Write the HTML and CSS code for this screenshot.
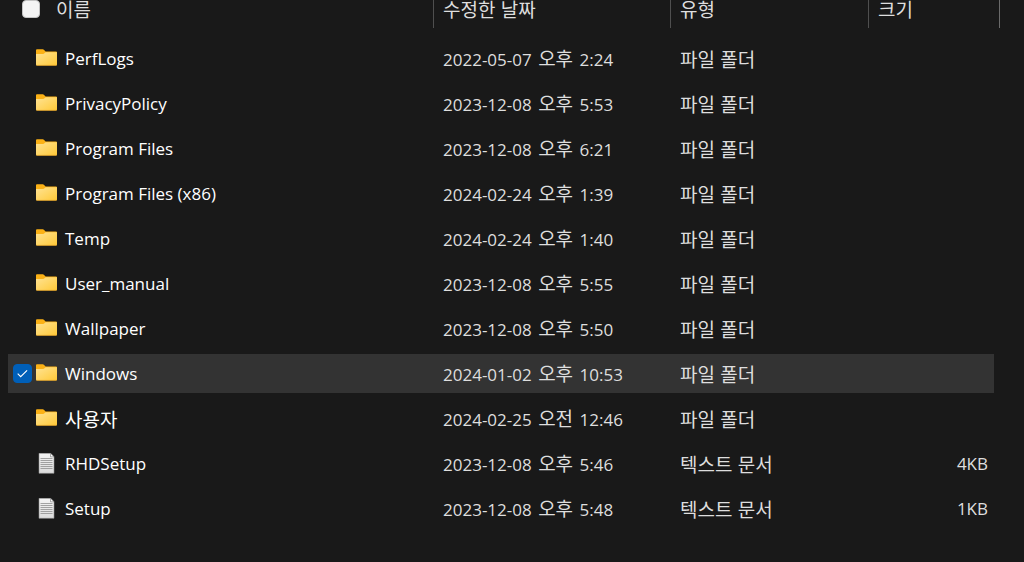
FILE: index.html
```html
<!DOCTYPE html>
<html lang="ko">
<head>
    <meta charset="UTF-8">
    <meta name="viewport" content="width=device-width, initial-scale=1.0">
    <title>로컬 디스크 (C:)</title>
    <link rel="stylesheet" href="styles.css">
</head>
<body>

    <!-- Shared icons -->
    <svg class="sprite" aria-hidden="true">
        <defs>
            <linearGradient id="folder-front" x1="0" y1="0" x2="1" y2="1">
                <stop offset="0" stop-color="#ffe394"/>
                <stop offset="1" stop-color="#ffc937"/>
            </linearGradient>
            <linearGradient id="paper" x1="0" y1="0" x2="0" y2="1">
                <stop offset="0" stop-color="#f4f4f4"/>
                <stop offset="1" stop-color="#dcdcdc"/>
            </linearGradient>
        </defs>
        <symbol id="folder" viewBox="0 0 21 21">
            <path d="M0 2.2Q0 1.3 1 1.3H6.8Q7.4 1.3 7.9 1.8L9.6 3.6H20Q21 3.6 21 4.6V9H0Z" fill="#fbb116"/>
            <path d="M0 6H7.2Q7.8 6 8.2 5.6L9.6 4.2H21V16.6Q21 17.6 20 17.6H1Q0 17.6 0 16.6Z" fill="url(#folder-front)"/>
            <path d="M.4 17.4H20.6" stroke="#e5a52a" stroke-width=".7"/>
        </symbol>
        <symbol id="document" viewBox="0 0 21 21">
            <path d="M3 .3H14.5L18 3.8V20.3H3Z" fill="url(#paper)" stroke="#8e8e8e" stroke-width=".6"/>
            <path d="M14.5 .3V3.8H18Z" fill="#fff" stroke="#777" stroke-width=".6"/>
            <path d="M4.5 5.5H16.5M4.5 7.5H16.5M4.5 9.5H16.5M4.5 11.5H16.5M4.5 13.5H16.5M4.5 15.5H16.5" stroke="#999" stroke-width=".9"/>
        </symbol>
    </svg>

    <table class="file-list">
        <colgroup>
            <col>
            <col class="col-date">
            <col class="col-type">
            <col class="col-size">
            <col class="col-end">
        </colgroup>
        <thead>
            <tr>
                <th>
                    <div class="head-name">
                        <input type="checkbox" class="check-all" aria-label="모두 선택">
                        <span>이름</span>
                    </div>
                </th>
                <th>수정한 날짜</th>
                <th>유형</th>
                <th class="head-size">크기</th>
                <th class="head-end"></th>
            </tr>
        </thead>
        <tbody>
            <tr>
                <td><label class="name"><input type="checkbox"><svg class="icon"><use href="#folder"/></svg>PerfLogs</label></td>
                <td>2022-05-07 <span class="ko">오후</span> 2:24</td>
                <td class="ko">파일 폴더</td>
                <td class="size"></td>
            </tr>
            <tr>
                <td><label class="name"><input type="checkbox"><svg class="icon"><use href="#folder"/></svg>PrivacyPolicy</label></td>
                <td>2023-12-08 <span class="ko">오후</span> 5:53</td>
                <td class="ko">파일 폴더</td>
                <td class="size"></td>
            </tr>
            <tr>
                <td><label class="name"><input type="checkbox"><svg class="icon"><use href="#folder"/></svg>Program Files</label></td>
                <td>2023-12-08 <span class="ko">오후</span> 6:21</td>
                <td class="ko">파일 폴더</td>
                <td class="size"></td>
            </tr>
            <tr>
                <td><label class="name"><input type="checkbox"><svg class="icon"><use href="#folder"/></svg>Program Files (x86)</label></td>
                <td>2024-02-24 <span class="ko">오후</span> 1:39</td>
                <td class="ko">파일 폴더</td>
                <td class="size"></td>
            </tr>
            <tr>
                <td><label class="name"><input type="checkbox"><svg class="icon"><use href="#folder"/></svg>Temp</label></td>
                <td>2024-02-24 <span class="ko">오후</span> 1:40</td>
                <td class="ko">파일 폴더</td>
                <td class="size"></td>
            </tr>
            <tr>
                <td><label class="name"><input type="checkbox"><svg class="icon"><use href="#folder"/></svg>User_manual</label></td>
                <td>2023-12-08 <span class="ko">오후</span> 5:55</td>
                <td class="ko">파일 폴더</td>
                <td class="size"></td>
            </tr>
            <tr>
                <td><label class="name"><input type="checkbox"><svg class="icon"><use href="#folder"/></svg>Wallpaper</label></td>
                <td>2023-12-08 <span class="ko">오후</span> 5:50</td>
                <td class="ko">파일 폴더</td>
                <td class="size"></td>
            </tr>
            <tr class="selected">
                <td><label class="name"><input type="checkbox" checked><svg class="icon"><use href="#folder"/></svg>Windows</label></td>
                <td>2024-01-02 <span class="ko">오후</span> 10:53</td>
                <td class="ko">파일 폴더</td>
                <td class="size"></td>
            </tr>
            <tr>
                <td><label class="name ko-name"><input type="checkbox"><svg class="icon"><use href="#folder"/></svg>사용자</label></td>
                <td>2024-02-25 <span class="ko">오전</span> 12:46</td>
                <td class="ko">파일 폴더</td>
                <td class="size"></td>
            </tr>
            <tr>
                <td><label class="name"><input type="checkbox"><svg class="icon"><use href="#document"/></svg>RHDSetup</label></td>
                <td>2023-12-08 <span class="ko">오후</span> 5:46</td>
                <td class="ko">텍스트 문서</td>
                <td class="size">4KB</td>
            </tr>
            <tr>
                <td><label class="name"><input type="checkbox"><svg class="icon"><use href="#document"/></svg>Setup</label></td>
                <td>2023-12-08 <span class="ko">오후</span> 5:48</td>
                <td class="ko">텍스트 문서</td>
                <td class="size">1KB</td>
            </tr>
        </tbody>
    </table>

</body>
</html>
```
FILE: styles.css
```css
* {
    box-sizing: border-box;
}

body {
    margin: 0;
    padding: 0 24px 0 8px;
    background-color: #191919;
    color: #dedede;
    font-family: "Open Sans", "Noto Sans CJK KR", sans-serif;
    font-size: 17px;
    line-height: 20px;
}

.sprite {
    position: absolute;
    width: 0;
    height: 0;
}

.file-list {
    width: 100%;
    table-layout: fixed;
    border-collapse: separate;
    border-spacing: 0;
}

.col-date {
    width: 237px;
}

.col-type {
    width: 198px;
}

.col-size {
    width: 125px;
}

.col-end {
    width: 6px;
}

/* Korean text is set a little larger than the Latin text */
.ko,
.ko-name,
th {
    font-family: "Noto Sans CJK KR", sans-serif;
    font-size: 19px;
    font-weight: 400;
}

span.ko {
    margin: 0 2px;
}

/* Header */
th {
    height: 28px;
    padding: 0 0 10px 9px;
    border-right: 1px solid #4f4f4f;
    line-height: 18px;
    text-align: left;
    white-space: nowrap;
}

.head-size {
    border-right: none;
}

.head-end {
    padding: 0;
    border-right-color: #6a6a6a;
}

.head-name {
    display: flex;
    align-items: center;
    gap: 16px;
    padding-left: 5px;
}

.check-all {
    appearance: none;
    width: 18px;
    height: 18px;
    margin: 0;
    border: 1px solid #c4c4c4;
    border-radius: 4px;
    background-color: #f5f5f5;
}

/* Rows */
tbody::before {
    content: "";
    display: block;
    height: 8px;
}

td {
    height: 45px;
    padding: 0 0 0 9px;
    border: solid transparent;
    border-width: 3px 0;
    background-clip: padding-box;
    white-space: nowrap;
}

td:first-child {
    padding-left: 5px;
}

.size {
    padding: 0 6px 0 0;
    text-align: right;
}

.name {
    display: flex;
    align-items: center;
    color: #ffffff;
}

.name input {
    appearance: none;
    width: 19px;
    height: 19px;
    margin: 0 4px 0 0;
    border: 1px solid #9a9a9a;
    border-radius: 4px;
    opacity: 0;
}

tr:hover .name input,
.name input:checked {
    opacity: 1;
}

.name input:checked {
    border-color: #005fb8;
    background: #005fb8 url("data:image/svg+xml,%3Csvg xmlns='http://www.w3.org/2000/svg' viewBox='0 0 17 17'%3E%3Cpath d='M3.7 8.7l3 3 6.4-6.4' fill='none' stroke='white' stroke-width='1.1'/%3E%3C/svg%3E") center / 17px 17px no-repeat;
}

.icon {
    width: 21px;
    height: 21px;
    margin-right: 8px;
}

.selected td {
    background-color: #333333;
}

.selected td:first-child {
    border-radius: 2px 0 0 2px;
}

.selected td:last-child {
    border-radius: 0 2px 2px 0;
}
```
